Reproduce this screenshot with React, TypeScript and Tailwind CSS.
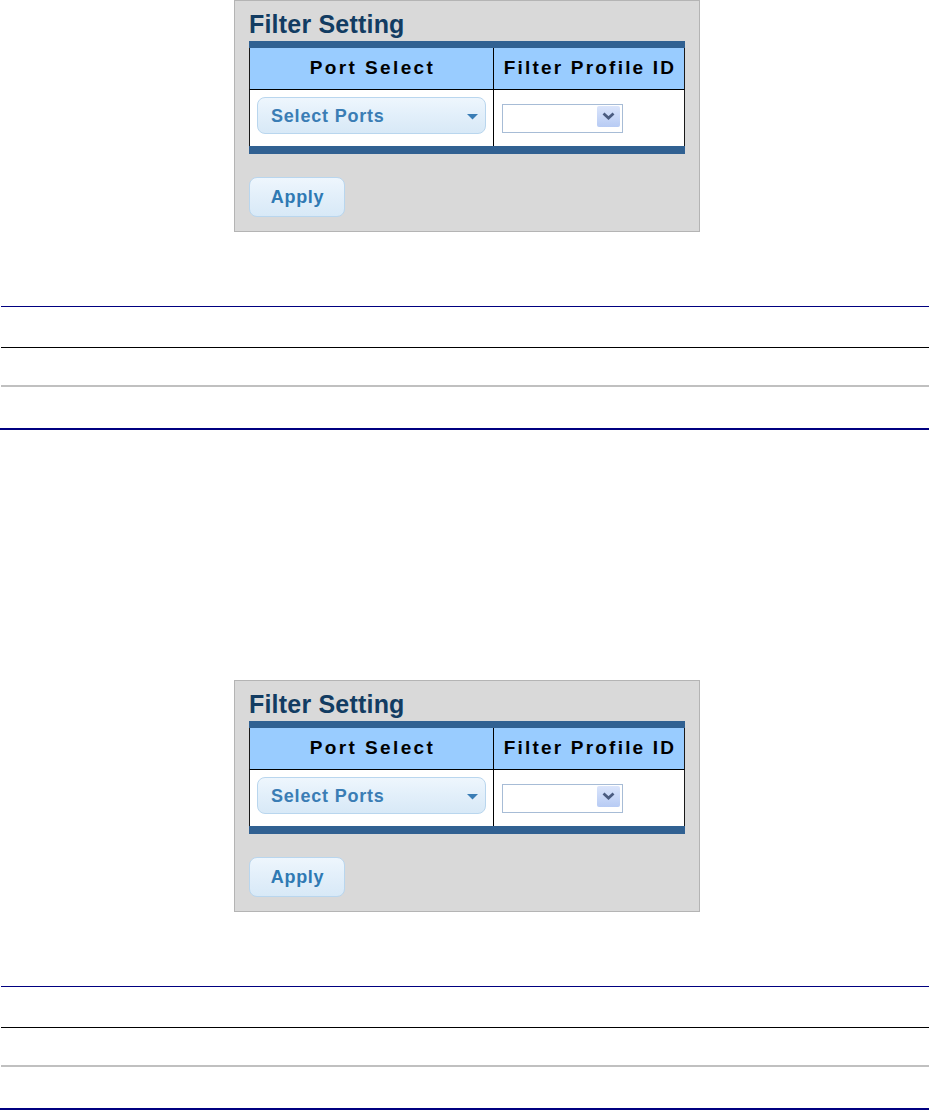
import React from 'react';

const font = { fontFamily: '"Liberation Sans", Arial, sans-serif' };

function SelectPorts() {
  return (
    <div className="flex h-[37px] w-[229px] items-center justify-between rounded-[8px] border border-[#b9d6ee] bg-gradient-to-b from-[#eef6fd] via-[#e2effa] to-[#d8e9f7] pl-[13px] pr-[7px]">
      <span className="text-[18px] font-bold leading-none tracking-[0.8px] text-[#3a7db5]">Select Ports</span>
      <svg width="11" height="6" viewBox="0 0 11 6" className="mt-[3px]">
        <polygon points="0,0 11,0 5.5,5.5" fill="#3a7db5" />
      </svg>
    </div>
  );
}

function ProfileSelect() {
  return (
    <div className="flex h-[29px] w-[121px] items-start justify-end border border-[#a7bcd6] bg-white pr-[2px] pt-[1px]">
      <div className="flex h-[21px] w-[23px] items-center justify-center rounded-[2px] bg-gradient-to-b from-[#dbe5fb] to-[#b7cbf4]">
        <svg width="13" height="8" viewBox="0 0 13 8">
          <polyline points="1.5,1.5 6.5,6 11.5,1.5" fill="none" stroke="#4b5c80" strokeWidth="2.8" />
        </svg>
      </div>
    </div>
  );
}

function FilterPanel() {
  return (
    <div className="ml-[234px] w-[466px] border border-[#b4b4b4] bg-[#d9d9d9] px-[14px] pb-[14px] pt-[9px]">
      <h2 className="h-[28px] text-[25px] font-bold leading-[28px] tracking-[0.2px] text-[#123c62]">Filter Setting</h2>
      <div className="mt-[3px] w-[436px]">
        <div className="h-[7px] bg-[#316192]" />
        <div className="grid grid-cols-[244px_1fr] border-x border-b border-x-[#1a1a1a] border-b-black bg-[#99ccff]">
          <div className="flex h-[41px] items-center justify-center border-r border-black pl-[2px] text-[19px] font-bold tracking-[2.4px] text-black">
            Port Select
          </div>
          <div className="flex h-[41px] items-center justify-center pl-[2px] text-[19px] font-bold tracking-[2.2px] text-black">
            Filter Profile ID
          </div>
        </div>
        <div className="grid h-[56px] grid-cols-[244px_1fr] border-x border-x-[#1a1a1a] bg-white">
          <div className="border-r border-black pl-[7px] pt-[7px]">
            <SelectPorts />
          </div>
          <div className="flex items-center pl-[8px]">
            <ProfileSelect />
          </div>
        </div>
        <div className="h-[8px] bg-[#316192]" />
      </div>
      <button className="mt-[23px] flex h-[40px] w-[96px] items-center justify-center rounded-[8px] border border-[#b9d6ee] bg-gradient-to-b from-[#eef6fd] via-[#e2effa] to-[#d8e9f7] pl-[1px] text-[18px] font-bold leading-none tracking-[0.7px] text-[#2f79b3]">
        Apply
      </button>
    </div>
  );
}

function Rules() {
  return (
    <div className="mt-[74px]">
      <div className="ml-[1px] h-px bg-[#000080]" />
      <div className="ml-[1px] mt-[40px] h-px bg-black" />
      <div className="ml-[1px] mt-[37px] h-[2px] bg-[#c0c0c0]" />
      <div className="mt-[41px] h-[2px] bg-[#000080]" />
    </div>
  );
}

export default function App() {
  return (
    <div className="min-h-[1110px] w-[929px] bg-white" style={font}>
      <FilterPanel />
      <Rules />
      <div className="mt-[250px]">
        <FilterPanel />
        <Rules />
      </div>
    </div>
  );
}
